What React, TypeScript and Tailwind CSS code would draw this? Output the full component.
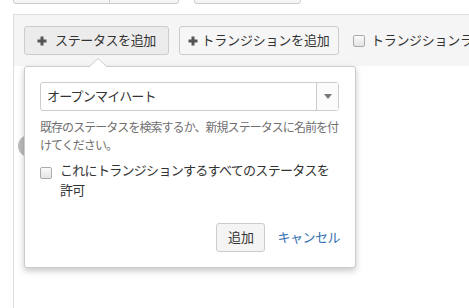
import React from 'react';

const PlusIcon = () => (
  <svg width="10" height="10" viewBox="0 0 10 10" className="shrink-0">
    <rect x="3.5" y="0.5" width="3" height="9" fill="#555" />
    <rect x="0.5" y="3.5" width="9" height="3" fill="#555" />
  </svg>
);

const Checkbox = () => (
  <span className="inline-block w-[12px] h-[12px] shrink-0 rounded-[2px] border border-[#aaa] bg-gradient-to-b from-[#fafafa] to-[#e4e4e4]" />
);

const AddStatusPopup: React.FC = () => (
  <div className="absolute left-[10px] top-0 w-[332px] bg-white border border-[#ccc] rounded-[3px] shadow-[0_3px_6px_rgba(0,0,0,0.22)] px-[15px] pt-[15px] pb-[15px]">
    {/* arrow */}
    <svg width="18" height="9" viewBox="0 0 18 9" className="absolute left-[64px] top-[-9px]">
      <path d="M0 9 L9 0.5 L18 9" fill="white" stroke="#ccc" strokeWidth="1" />
    </svg>

    <div className="flex h-[29px] w-[299px] border border-[#ccc] rounded-[3px]">
      <div className="flex-1 flex items-center pl-[6px] text-[13px] tracking-[-0.8px] text-[#333]">
        オープンマイハート
      </div>
      <div className="w-[22px] border-l border-[#ccc] flex items-center justify-center bg-[#fbfbfb]">
        <svg width="8" height="5" viewBox="0 0 8 5">
          <path d="M0 0 L8 0 L4 5 Z" fill="#777" />
        </svg>
      </div>
    </div>

    <p className="mt-[8px] text-[12px] leading-[18px] tracking-[-0.95px] text-[#707070]">
      既存のステータスを検索するか、新規ステータスに名前を付けてください。
    </p>

    <label className="mt-[6px] flex items-start gap-[8px] text-[13px] leading-[20px] tracking-[-0.7px] text-[#333]">
      <span className="pt-[4px]">
        <Checkbox />
      </span>
      <span>これにトランジションするすべてのステータスを許可</span>
    </label>

    <div className="mt-[22px] flex items-center justify-end gap-[12px]">
      <button className="h-[29px] w-[49px] rounded-[3px] border border-[#ccc] bg-[#f4f4f4] text-[13px] text-[#333]">
        追加
      </button>
      <a className="text-[13px] tracking-[-0.5px] text-[#3572b0]">キャンセル</a>
    </div>
  </div>
);

export default function App() {
  return (
    <div className="h-[308px] w-[469px] overflow-hidden bg-white flex flex-col font-['Liberation_Sans','Noto_Sans_CJK_JP',sans-serif]">
      {/* buttons of the bar above, cut off */}
      <div className="flex gap-[15px] pl-[13px] h-[4px] shrink-0">
        <div className="flex w-[166px] h-[30px] mt-[-26px] border border-[#ccc] rounded-[3px] bg-[#f5f5f5]">
          <div className="w-[96px] border-r border-[#ccc]" />
        </div>
        <div className="w-[107px] h-[30px] mt-[-26px] border border-[#ccc] rounded-[3px] bg-[#f5f5f5]" />
      </div>

      <div className="mt-[10px] ml-[13px] flex-1 flex flex-col border-l border-t border-[#ddd] overflow-hidden">
        {/* toolbar */}
        <div className="h-[51px] shrink-0 bg-[#f5f5f5] flex items-center pl-[10px] gap-[10px] whitespace-nowrap">
          <button className="shrink-0 h-[29px] w-[145px] flex items-center justify-center gap-[8px] rounded-[3px] border border-[#ccc] bg-[#ececec] text-[13px] tracking-[-0.4px] text-[#333]">
            <PlusIcon />
            ステータスを追加
          </button>
          <button className="shrink-0 h-[29px] w-[160px] flex items-center justify-center gap-[3px] rounded-[3px] border border-[#ccc] bg-[#f6f6f6] text-[13px] tracking-[-0.2px] text-[#333]">
            <PlusIcon />
            トランジションを追加
          </button>
          <label className="shrink-0 ml-[4px] flex items-center gap-[6px] text-[13px] tracking-[-0.3px] text-[#333]">
            <Checkbox />
            トランジションラベルを表示
          </label>
        </div>

        {/* canvas */}
        <div className="relative flex-1 bg-white">
          <div className="absolute left-[4px] top-[69px] w-[22px] h-[22px] rounded-full bg-[#bbb]" />
          <AddStatusPopup />
        </div>
      </div>
    </div>
  );
}
